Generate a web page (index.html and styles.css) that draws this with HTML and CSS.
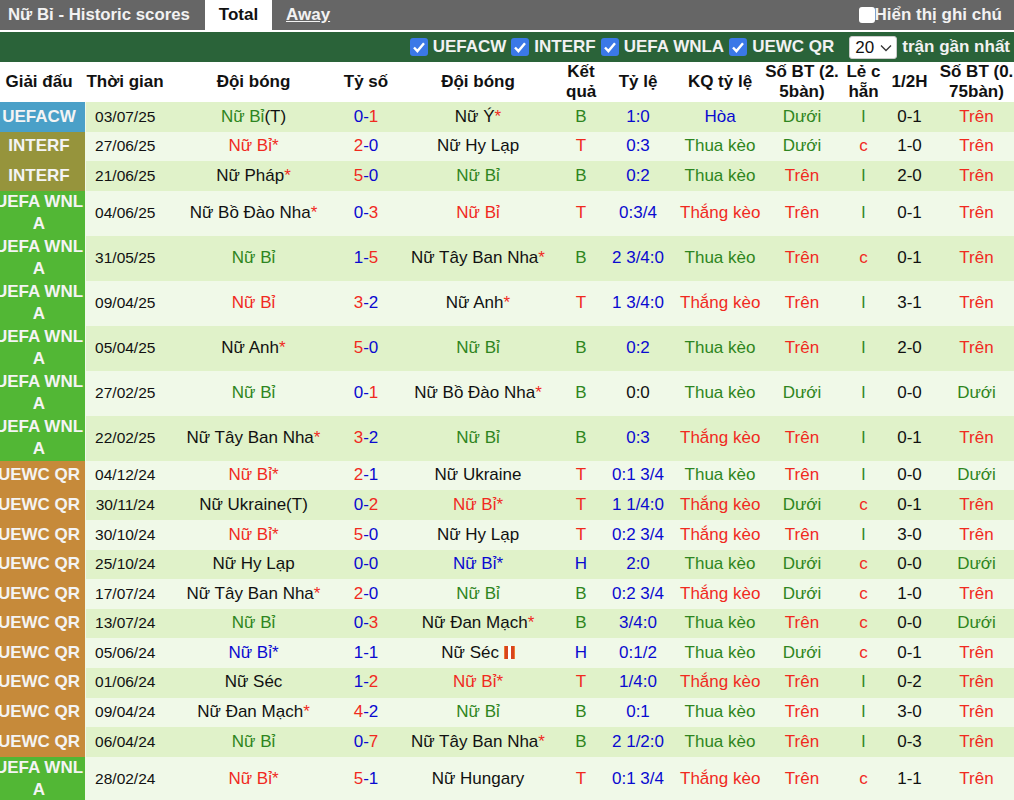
FILE: index.html
```html
<!DOCTYPE html>
<html lang="vi">
<head>
    <meta charset="UTF-8">
    <meta name="viewport" content="width=device-width, initial-scale=1.0">
    <title>Nữ Bỉ - Historic scores</title>
    <link rel="stylesheet" href="styles.css">
</head>
<body>

<div class="tabs">
    <span class="tab-title">Nữ Bỉ - Historic scores</span>
    <span class="tab active">Total</span>
    <a class="tab away" href="#">Away</a>
    <label class="notes"><span class="box"></span>Hiển thị ghi chú</label>
</div>

<div class="filters">
    <label class="filter"><span class="check"><svg viewBox="0 0 18 18"><path d="M4 9.5l3.4 3.6L14 5.2"/></svg></span>UEFACW</label>
    <label class="filter"><span class="check"><svg viewBox="0 0 18 18"><path d="M4 9.5l3.4 3.6L14 5.2"/></svg></span>INTERF</label>
    <label class="filter"><span class="check"><svg viewBox="0 0 18 18"><path d="M4 9.5l3.4 3.6L14 5.2"/></svg></span>UEFA WNLA</label>
    <label class="filter"><span class="check"><svg viewBox="0 0 18 18"><path d="M4 9.5l3.4 3.6L14 5.2"/></svg></span>UEWC QR</label>
    <div class="count">
        <select class="count-select"><option>20</option></select>
        <svg class="chevron" viewBox="0 0 12 8"><path d="M1 1.5l5 5 5-5"/></svg>
    </div>
    <span class="count-label">trận gần nhất</span>
</div>

<table class="scores">
    <colgroup>
        <col class="c-league"><col class="c-date"><col class="c-home"><col class="c-score"><col class="c-away"><col class="c-result"><col class="c-odds"><col class="c-oddsres"><col class="c-goals"><col class="c-oe"><col class="c-half"><col class="c-last">
    </colgroup>
    <thead>
        <tr>
            <th>Giải đấu</th><th>Thời gian</th><th>Đội bóng</th><th>Tỷ số</th><th>Đội bóng</th><th>Kết<br>quả</th><th>Tỷ lệ</th><th>KQ tỷ lệ</th><th>Số BT (2.<br>5bàn)</th><th>Lẻ c<br>hẵn</th><th>1/2H</th><th>Số BT (0.<br>75bàn)</th>
        </tr>
    </thead>
    <tbody>
        <tr><td class="lg cw"><div class="lg-name">UEFACW</div></td><td>03/07/25</td><td><span class="g">Nữ Bỉ</span>(T)</td><td><span class="b">0</span><span class="b">-</span><span class="r">1</span></td><td>Nữ Ý<span class="r">*</span></td><td class="g">B</td><td class="b">1:0</td><td class="b">Hòa</td><td class="g">Dưới</td><td class="g">l</td><td>0-1</td><td class="r">Trên</td></tr>
        <tr><td class="lg inter"><div class="lg-name">INTERF</div></td><td>27/06/25</td><td class="r">Nữ Bỉ*</td><td><span class="r">2</span><span class="b">-0</span></td><td>Nữ Hy Lạp</td><td class="r">T</td><td class="b">0:3</td><td class="g">Thua kèo</td><td class="g">Dưới</td><td class="r">c</td><td>1-0</td><td class="r">Trên</td></tr>
        <tr><td class="lg inter"><div class="lg-name">INTERF</div></td><td>21/06/25</td><td>Nữ Pháp<span class="r">*</span></td><td><span class="r">5</span><span class="b">-0</span></td><td class="g">Nữ Bỉ</td><td class="g">B</td><td class="b">0:2</td><td class="g">Thua kèo</td><td class="r">Trên</td><td class="g">l</td><td>2-0</td><td class="r">Trên</td></tr>
        <tr><td class="lg wnla"><div class="lg-name">UEFA WNLA</div></td><td>04/06/25</td><td>Nữ Bồ Đào Nha<span class="r">*</span></td><td><span class="b">0-</span><span class="r">3</span></td><td class="r">Nữ Bỉ</td><td class="r">T</td><td class="b">0:3/4</td><td class="r">Thắng kèo</td><td class="r">Trên</td><td class="g">l</td><td>0-1</td><td class="r">Trên</td></tr>
        <tr><td class="lg wnla"><div class="lg-name">UEFA WNLA</div></td><td>31/05/25</td><td class="g">Nữ Bỉ</td><td><span class="b">1-</span><span class="r">5</span></td><td>Nữ Tây Ban Nha<span class="r">*</span></td><td class="g">B</td><td class="b">2 3/4:0</td><td class="g">Thua kèo</td><td class="r">Trên</td><td class="r">c</td><td>0-1</td><td class="r">Trên</td></tr>
        <tr><td class="lg wnla"><div class="lg-name">UEFA WNLA</div></td><td>09/04/25</td><td class="r">Nữ Bỉ</td><td><span class="r">3</span><span class="b">-2</span></td><td>Nữ Anh<span class="r">*</span></td><td class="r">T</td><td class="b">1 3/4:0</td><td class="r">Thắng kèo</td><td class="r">Trên</td><td class="g">l</td><td>3-1</td><td class="r">Trên</td></tr>
        <tr><td class="lg wnla"><div class="lg-name">UEFA WNLA</div></td><td>05/04/25</td><td>Nữ Anh<span class="r">*</span></td><td><span class="r">5</span><span class="b">-0</span></td><td class="g">Nữ Bỉ</td><td class="g">B</td><td class="b">0:2</td><td class="g">Thua kèo</td><td class="r">Trên</td><td class="g">l</td><td>2-0</td><td class="r">Trên</td></tr>
        <tr><td class="lg wnla"><div class="lg-name">UEFA WNLA</div></td><td>27/02/25</td><td class="g">Nữ Bỉ</td><td><span class="b">0-</span><span class="r">1</span></td><td>Nữ Bồ Đào Nha<span class="r">*</span></td><td class="g">B</td><td>0:0</td><td class="g">Thua kèo</td><td class="g">Dưới</td><td class="g">l</td><td>0-0</td><td class="g">Dưới</td></tr>
        <tr><td class="lg wnla"><div class="lg-name">UEFA WNLA</div></td><td>22/02/25</td><td>Nữ Tây Ban Nha<span class="r">*</span></td><td><span class="r">3</span><span class="b">-2</span></td><td class="g">Nữ Bỉ</td><td class="g">B</td><td class="b">0:3</td><td class="r">Thắng kèo</td><td class="r">Trên</td><td class="g">l</td><td>0-1</td><td class="r">Trên</td></tr>
        <tr><td class="lg uewc"><div class="lg-name">UEWC QR</div></td><td>04/12/24</td><td class="r">Nữ Bỉ*</td><td><span class="r">2</span><span class="b">-1</span></td><td>Nữ Ukraine</td><td class="r">T</td><td class="b">0:1 3/4</td><td class="g">Thua kèo</td><td class="r">Trên</td><td class="g">l</td><td>0-0</td><td class="g">Dưới</td></tr>
        <tr><td class="lg uewc"><div class="lg-name">UEWC QR</div></td><td>30/11/24</td><td>Nữ Ukraine(T)</td><td><span class="b">0-</span><span class="r">2</span></td><td class="r">Nữ Bỉ*</td><td class="r">T</td><td class="b">1 1/4:0</td><td class="r">Thắng kèo</td><td class="g">Dưới</td><td class="r">c</td><td>0-1</td><td class="r">Trên</td></tr>
        <tr><td class="lg uewc"><div class="lg-name">UEWC QR</div></td><td>30/10/24</td><td class="r">Nữ Bỉ*</td><td><span class="r">5</span><span class="b">-0</span></td><td>Nữ Hy Lạp</td><td class="r">T</td><td class="b">0:2 3/4</td><td class="r">Thắng kèo</td><td class="r">Trên</td><td class="g">l</td><td>3-0</td><td class="r">Trên</td></tr>
        <tr><td class="lg uewc"><div class="lg-name">UEWC QR</div></td><td>25/10/24</td><td>Nữ Hy Lạp</td><td class="b">0-0</td><td class="b">Nữ Bỉ*</td><td class="b">H</td><td class="b">2:0</td><td class="g">Thua kèo</td><td class="g">Dưới</td><td class="r">c</td><td>0-0</td><td class="g">Dưới</td></tr>
        <tr><td class="lg uewc"><div class="lg-name">UEWC QR</div></td><td>17/07/24</td><td>Nữ Tây Ban Nha<span class="r">*</span></td><td><span class="r">2</span><span class="b">-0</span></td><td class="g">Nữ Bỉ</td><td class="g">B</td><td class="b">0:2 3/4</td><td class="r">Thắng kèo</td><td class="g">Dưới</td><td class="r">c</td><td>1-0</td><td class="r">Trên</td></tr>
        <tr><td class="lg uewc"><div class="lg-name">UEWC QR</div></td><td>13/07/24</td><td class="g">Nữ Bỉ</td><td><span class="b">0-</span><span class="r">3</span></td><td>Nữ Đan Mạch<span class="r">*</span></td><td class="g">B</td><td class="b">3/4:0</td><td class="g">Thua kèo</td><td class="r">Trên</td><td class="r">c</td><td>0-0</td><td class="g">Dưới</td></tr>
        <tr><td class="lg uewc"><div class="lg-name">UEWC QR</div></td><td>05/06/24</td><td class="b">Nữ Bỉ*</td><td class="b">1-1</td><td>Nữ Séc <span class="card"></span></td><td class="b">H</td><td class="b">0:1/2</td><td class="g">Thua kèo</td><td class="g">Dưới</td><td class="r">c</td><td>0-1</td><td class="r">Trên</td></tr>
        <tr><td class="lg uewc"><div class="lg-name">UEWC QR</div></td><td>01/06/24</td><td>Nữ Séc</td><td><span class="b">1-</span><span class="r">2</span></td><td class="r">Nữ Bỉ*</td><td class="r">T</td><td class="b">1/4:0</td><td class="r">Thắng kèo</td><td class="r">Trên</td><td class="g">l</td><td>0-2</td><td class="r">Trên</td></tr>
        <tr><td class="lg uewc"><div class="lg-name">UEWC QR</div></td><td>09/04/24</td><td>Nữ Đan Mạch<span class="r">*</span></td><td><span class="r">4</span><span class="b">-2</span></td><td class="g">Nữ Bỉ</td><td class="g">B</td><td class="b">0:1</td><td class="g">Thua kèo</td><td class="r">Trên</td><td class="g">l</td><td>3-0</td><td class="r">Trên</td></tr>
        <tr><td class="lg uewc"><div class="lg-name">UEWC QR</div></td><td>06/04/24</td><td class="g">Nữ Bỉ</td><td><span class="b">0-</span><span class="r">7</span></td><td>Nữ Tây Ban Nha<span class="r">*</span></td><td class="g">B</td><td class="b">2 1/2:0</td><td class="g">Thua kèo</td><td class="r">Trên</td><td class="g">l</td><td>0-3</td><td class="r">Trên</td></tr>
        <tr><td class="lg wnla"><div class="lg-name">UEFA WNLA</div></td><td>28/02/24</td><td class="r">Nữ Bỉ*</td><td><span class="r">5</span><span class="b">-1</span></td><td>Nữ Hungary</td><td class="r">T</td><td class="b">0:1 3/4</td><td class="r">Thắng kèo</td><td class="r">Trên</td><td class="r">c</td><td>1-1</td><td class="r">Trên</td></tr>
    </tbody>
</table>

</body>
</html>
```

FILE: styles.css
```css
body {
    margin: 0;
    font-family: "Liberation Sans", Arial, sans-serif;
    font-size: 17px;
    color: #111;
    background-color: #fff;
    overflow-x: hidden;
}

/* top tabs */
.tabs {
    display: flex;
    align-items: center;
    height: 30px;
    padding: 0 12px 0 8px;
    background-color: #666;
    color: #f2f2f2;
    font-weight: bold;
}
.tab-title {
    width: 197px;
    font-size: 16.8px;
}
.tab {
    display: flex;
    align-items: center;
    height: 30px;
}
.tab.active {
    width: 67px;
    justify-content: center;
    background-color: #fff;
    color: #111;
}
.tab.away {
    margin-left: 14px;
    color: #f2f2f2;
}
.notes {
    display: flex;
    align-items: center;
    margin-left: auto;
}
.box {
    width: 16px;
    height: 16px;
    border-radius: 3px;
    background-color: #fff;
}

/* league filters */
.filters {
    display: flex;
    align-items: center;
    justify-content: flex-end;
    height: 30px;
    margin-top: 2px;
    padding-right: 4px;
    background-color: #2a6339;
    color: #f2f2f2;
    font-weight: bold;
}
.filter {
    display: flex;
    align-items: center;
    margin-right: 5px;
}
.check {
    display: block;
    width: 18px;
    height: 18px;
    margin-right: 5px;
    border-radius: 3px;
    background-color: #3b78e7;
}
.check svg {
    display: block;
    width: 18px;
    height: 18px;
}
.check path {
    fill: none;
    stroke: #fff;
    stroke-width: 2.4;
}
.count {
    position: relative;
    margin: 0 5px 0 10px;
}
.count-select {
    display: block;
    appearance: none;
    width: 48px;
    height: 23px;
    padding: 0 0 0 5px;
    border: 1px solid #ccc;
    border-radius: 3px;
    background-color: #fff;
    color: #111;
    font-family: inherit;
    font-size: 17px;
}
.chevron {
    position: absolute;
    top: 8px;
    right: 5px;
    width: 12px;
    height: 8px;
}
.chevron path {
    fill: none;
    stroke: #333;
    stroke-width: 1.3;
}

/* results table */
.scores {
    table-layout: fixed;
    width: 1017px;
    border-collapse: collapse;
}
.c-league { width: 85px; }
.c-date { width: 80px; }
.c-home { width: 177px; }
.c-score { width: 48px; }
.c-away { width: 176px; }
.c-result { width: 30px; }
.c-odds { width: 84px; }
.c-oddsres { width: 80px; }
.c-goals { width: 84px; }
.c-oe { width: 39px; }
.c-half { width: 53px; }
.c-last { width: 81px; }

.scores th {
    height: 40px;
    padding: 0;
    line-height: 20px;
    text-align: center;
    white-space: nowrap;
}
.scores th:first-child {
    padding-right: 7px;
}
.scores td {
    height: 29.6px;
    padding: 0;
    line-height: 22.5px;
    text-align: center;
    white-space: nowrap;
}
.scores td:nth-child(2) {
    font-size: 15.5px;
}
.scores tbody tr:nth-child(odd) {
    background-color: #e0f2c9;
}
.scores tbody tr:nth-child(even) {
    background-color: #f0f9e8;
}
.scores td.lg {
    color: #f4f4f4;
    font-weight: bold;
    white-space: normal;
    border-right: 1px solid #f0f9e8;
}
.lg-name {
    width: 92px;
    margin-left: -7px;
    word-break: break-all;
}
.cw { background-color: #4aa0c8; }
.inter { background-color: #96943c; }
.wnla { background-color: #52b735; }
.uewc { background-color: #c68a3a; }

.g { color: #2e8520; }
.r { color: #f02a1f; }
.b { color: #0a0ad0; }

.card {
    display: inline-block;
    width: 11px;
    height: 13px;
    vertical-align: -1px;
    background: linear-gradient(to right, #ee7a30 12%, #d8451c 12%, #d8451c 38%, #fff 38%, #fff 60%, #d8451c 60%, #d8451c 88%, #ee7a30 88%);
}
```
